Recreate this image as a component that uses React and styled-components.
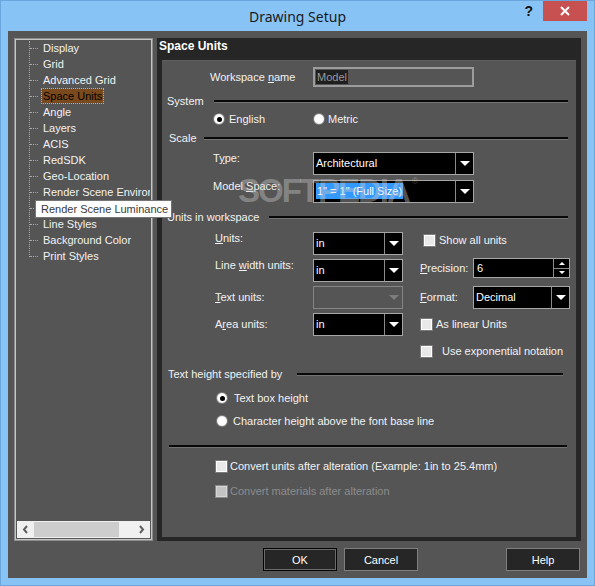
import React from "react"
import styled, { createGlobalStyle } from "styled-components"

const GlobalStyle = createGlobalStyle`
  html, body {
    margin: 0;
    padding: 0;
    background: #ffffff;
  }
  body {
    font-family: "Liberation Sans", Arial, sans-serif;
    font-size: 11px;
  }
`

const Window = styled.div`
  width: 595px;
  height: 586px;
  box-sizing: border-box;
  background: #88c3f5;
  border: 1px solid #6aa6dc;
  display: flex;
  flex-direction: column;
`

const TitleBar = styled.div`
  height: 30px;
  display: grid;
  grid-template-columns: 1fr auto 1fr;
  align-items: start;
`

const Title = styled.div`
  grid-column: 2;
  font-family: "Noto Sans", "Open Sans", sans-serif;
  font-size: 14px;
  color: #1a1a1a;
  line-height: 20px;
  padding-top: 6px;
`

const TitleButtons = styled.div`
  grid-column: 3;
  justify-self: end;
  display: flex;
  align-items: flex-start;
  margin-right: 7px;
`

const HelpGlyph = styled.span`
  font-family: "Liberation Sans", sans-serif;
  font-weight: bold;
  font-size: 14px;
  color: #111;
  line-height: 20px;
  margin-right: 10px;
`

const CloseButton = styled.div`
  width: 44px;
  height: 20px;
  background: #c75050;
  color: #fff;
  display: flex;
  align-items: center;
  justify-content: center;
`

const Client = styled.div`
  position: relative;
  flex: 1;
  margin: 0 7px 7px 7px;
  background: #555555;
  padding: 7px 6px 0 6px;
  display: flex;
  flex-direction: column;
  color: #f2f2f2;
`

const Panels = styled.div`
  height: 503px;
  display: flex;
  gap: 4px;
`

const TreePanel = styled.div`
  width: 139px;
  box-sizing: border-box;
  border: 1px solid #8c8c8c;
  box-shadow: inset 0 0 0 1px #c6c6c6;
  padding: 1px 2px 2px 2px;
  display: flex;
  flex-direction: column;
  overflow: hidden;
`

const TreeList = styled.div`
  position: relative;
  flex: 1;
  padding: 0 0 0 24px;
  overflow: hidden;
  &::before {
    content: "";
    position: absolute;
    left: 12px;
    top: 1px;
    height: 216px;
    border-left: 1px dotted #a8a8a8;
  }
`

const TreeItem = styled.div`
  position: relative;
  height: 16px;
  line-height: 16px;
  white-space: nowrap;
  padding: 0 2px;
  &::before {
    content: "";
    position: absolute;
    left: -11px;
    top: 8px;
    width: 8px;
    border-top: 1px dotted #a8a8a8;
  }
  span {
    display: inline-block;
    line-height: 14px;
    padding: 0 1px;
    margin-left: -1px;
    background: ${({ $selected }) => ($selected ? "#7b4a1c" : "transparent")};
    color: ${({ $selected }) => ($selected ? "#000" : "#f2f2f2")};
    outline: ${({ $selected }) => ($selected ? "1px dotted #c9b08a" : "none")};
  }
`

const HScroll = styled.div`
  height: 17px;
  background: #f0f0f0;
  display: flex;
  align-items: stretch;
`

const ScrollArrow = styled.div`
  width: 17px;
  display: flex;
  align-items: center;
  justify-content: center;
`

const ScrollTrack = styled.div`
  flex: 1;
  display: flex;
  padding: 1px 0;
  padding-right: 15px;
`

const ScrollThumb = styled.div`
  width: 85px;
  background: #cdcdcd;
`

const PagePanel = styled.div`
  flex: 1;
  background: #262626;
  display: flex;
  flex-direction: column;
  padding: 0 5px 4px 5px;
`

const PageHeader = styled.div`
  height: 22px;
  margin-left: -3px;
  font-weight: bold;
  font-size: 12px;
  line-height: 16px;
  color: #fff;
`

const PageBody = styled.div`
  position: relative;
  flex: 1;
  background: #555555;
  border-top: 1px solid #5e5e5e;
  display: flex;
  flex-direction: column;
  overflow: hidden;
`

const Row = styled.div`
  display: flex;
  align-items: center;
  margin-top: ${({ $top }) => $top || 0}px;
  padding-left: ${({ $indent }) => $indent || 0}px;
`

// $raised labels sit at the top of their row, beside the control's top edge
const Label = styled.div`
  width: ${({ $width }) => ($width ? `${$width}px` : "auto")};
  flex-shrink: 0;
  white-space: nowrap;
  align-self: ${({ $raised }) => ($raised ? "flex-start" : "auto")};
  line-height: 13px;
  margin-top: ${({ $raised }) => ($raised && $raised !== true ? $raised : 0)}px;
  u {
    text-decoration: underline;
  }
`

const Section = styled.div`
  display: flex;
  align-items: center;
  height: 14px;
  margin-top: ${({ $top }) => $top}px;
  padding-left: ${({ $indent }) => $indent}px;
  padding-right: ${({ $right }) => $right || 8}px;
`

const Etched = styled.div`
  flex: 1;
  height: 0;
  border-top: 2px solid #080808;
  border-bottom: 1px solid #727272;
  margin-left: ${({ $gap }) => $gap || 0}px;
`

const TextInput = styled.div`
  width: 161px;
  height: 20px;
  box-sizing: border-box;
  border: 2px solid #9c9c9c;
  padding-left: 1px;
  display: flex;
  align-items: center;
  span {
    background: #1f1f1f;
    color: #9a9a9a;
    line-height: 14px;
    padding: 0 1px;
  }
`

const ComboBox = styled.div`
  width: ${({ $width }) => $width}px;
  height: 23px;
  box-sizing: border-box;
  border: 1px solid ${({ $disabled }) => ($disabled ? "#858585" : "#a6a6a6")};
  background: ${({ $disabled }) => ($disabled ? "#555" : "#000")};
  display: flex;
`

const ComboText = styled.div`
  flex: 1;
  padding-left: 2px;
  line-height: 21px;
  color: #fff;
  white-space: nowrap;
  overflow: hidden;
  span {
    background: #3399ff;
    padding: 2px 1px;
  }
`

const ComboButton = styled.div`
  width: 17px;
  border-left: 1px solid ${({ $disabled }) => ($disabled ? "#555" : "#8a8a8a")};
  display: flex;
  align-items: center;
  justify-content: center;
  &::after {
    content: "";
    border-left: 5px solid transparent;
    border-right: 5px solid transparent;
    border-top: 5px solid ${({ $disabled }) => ($disabled ? "#7d7d7d" : "#fff")};
  }
`

const SpinBox = styled.div`
  width: 97px;
  height: 20px;
  box-sizing: border-box;
  border: 1px solid #a6a6a6;
  background: #000;
  display: flex;
  align-self: start;
  margin-top: -1px;
`

const SpinText = styled.div`
  flex: 1;
  padding-left: 3px;
  line-height: 18px;
  color: #fff;
`

const SpinButtons = styled.div`
  width: 15px;
  border-left: 1px solid #8a8a8a;
  display: flex;
  flex-direction: column;
`

const SpinArrow = styled.div`
  flex: 1;
  display: flex;
  align-items: center;
  justify-content: center;
  & + & {
    border-top: 1px solid #8a8a8a;
  }
  &::after {
    content: "";
    border-left: 3px solid transparent;
    border-right: 3px solid transparent;
    ${({ $up }) =>
      $up ? "border-bottom: 3px solid #fff;" : "border-top: 3px solid #fff;"}
  }
`

const UnitsGrid = styled.div`
  display: grid;
  grid-template-columns: 98px 90px 70px 97px;
  grid-auto-rows: 22px;
  row-gap: 5px;
  margin-top: 8px;
  padding-left: 53px;
  align-items: center;
`

const RightLabel = styled(Label)`
  padding-left: 17px;
`

const RightCell = styled.div`
  grid-column: 3 / span 2;
  margin-left: ${({ $offset }) => 17 + ($offset || 0)}px;
  align-self: ${({ $raised }) => ($raised ? "start" : "center")};
  margin-top: ${({ $raised }) => ($raised ? 1 : 0)}px;
`

const Choice = styled.label`
  display: flex;
  align-items: center;
  height: 14px;
  width: ${({ $width }) => ($width ? `${$width}px` : "auto")};
  color: ${({ $disabled }) => ($disabled ? "#8c8c8c" : "#f2f2f2")};
  white-space: nowrap;
`

const Radio = styled.span`
  width: 12px;
  height: 12px;
  box-sizing: border-box;
  border-radius: 50%;
  border: 1px solid #7d7d7d;
  background: radial-gradient(circle, #ffffff 55%, #dcdcdc 100%);
  display: flex;
  align-items: center;
  justify-content: center;
  margin-right: ${({ $gap }) => $gap || 4}px;
  &::after {
    content: "";
    width: 5px;
    height: 5px;
    border-radius: 50%;
    background: ${({ $checked }) => ($checked ? "#000" : "transparent")};
  }
`

const Check = styled.span`
  width: 13px;
  height: 13px;
  box-sizing: border-box;
  border: 1px solid ${({ $disabled }) => ($disabled ? "#8a8a8a" : "#7a7a7a")};
  background: ${({ $disabled }) => ($disabled ? "#c4c4c4" : "#e9e9e9")};
  box-shadow: inset 0 0 0 1px ${({ $disabled }) => ($disabled ? "#d6d6d6" : "#fff")};
  margin-right: ${({ $gap }) => $gap || 3}px;
  flex-shrink: 0;
`

const Watermark = styled.div`
  position: absolute;
  left: 76px;
  top: 111px;
  font-family: "Liberation Sans", Arial, sans-serif;
  font-weight: bold;
  font-size: 33px;
  letter-spacing: -2px;
  color: rgba(200, 200, 200, 0.42);
  pointer-events: none;
  sup {
    font-size: 9px;
    font-weight: normal;
    vertical-align: 18px;
    margin-left: 3px;
  }
`

const ButtonRow = styled.div`
  display: flex;
  justify-content: flex-end;
  margin-top: 7px;
  padding-right: 1px;
`

const DialogButton = styled.div`
  width: 74px;
  height: 23px;
  box-sizing: border-box;
  background: #262626;
  border: 1px solid ${({ $default }) => ($default ? "#050505" : "#7f7f7f")};
  box-shadow: ${({ $default }) => ($default ? "inset 0 0 0 1px #6a6a6a" : "none")};
  color: #fff;
  display: flex;
  align-items: center;
  justify-content: center;
  margin-right: ${({ $gap }) => $gap || 0}px;
`

const Tooltip = styled.div`
  position: absolute;
  left: 27px;
  top: 169px;
  width: 137px;
  height: 18px;
  box-sizing: border-box;
  background: #fff;
  border: 1px solid #767676;
  color: #3a3a3a;
  padding-left: 5px;
  line-height: 16px;
  white-space: nowrap;
  z-index: 5;
`

const treeItems = [
  "Display",
  "Grid",
  "Advanced Grid",
  "Space Units",
  "Angle",
  "Layers",
  "ACIS",
  "RedSDK",
  "Geo-Location",
  "Render Scene Environment",
  "Render Scene Luminance",
  "Line Styles",
  "Background Color",
  "Print Styles",
]

const Combo = ({ width, children, disabled }) => (
  <ComboBox $width={width} $disabled={disabled}>
    <ComboText>{children}</ComboText>
    <ComboButton $disabled={disabled} />
  </ComboBox>
)

const Chevron = ({ dir }) => (
  <svg width="7" height="9" viewBox="0 0 7 9">
    <path
      d={dir === "left" ? "M5 1 L2 4.5 L5 8" : "M2 1 L5 4.5 L2 8"}
      fill="none"
      stroke="#606060"
      strokeWidth="2"
    />
  </svg>
)

const App = () => {
  return (
    <>
      <GlobalStyle />
      <Window>
        <TitleBar>
          <Title>Drawing Setup</Title>
          <TitleButtons>
            <HelpGlyph>?</HelpGlyph>
            <CloseButton>
              <svg width="10" height="10" viewBox="0 0 10 10">
                <path d="M1 1 L9 9 M9 1 L1 9" stroke="#fff" strokeWidth="2" />
              </svg>
            </CloseButton>
          </TitleButtons>
        </TitleBar>
        <Client>
          <Panels>
            <TreePanel>
              <TreeList>
                {treeItems.map(item => (
                  <TreeItem key={item} $selected={item === "Space Units"}>
                    <span>{item}</span>
                  </TreeItem>
                ))}
              </TreeList>
              <HScroll>
                <ScrollArrow>
                  <Chevron dir="left" />
                </ScrollArrow>
                <ScrollTrack>
                  <ScrollThumb />
                </ScrollTrack>
                <ScrollArrow>
                  <Chevron dir="right" />
                </ScrollArrow>
              </HScroll>
            </TreePanel>

            <PagePanel>
              <PageHeader>Space Units</PageHeader>
              <PageBody>
                <Row $top={6} $indent={48}>
                  <Label $width={103}>
                    Workspace <u>n</u>ame
                  </Label>
                  <TextInput>
                    <span>Model</span>
                  </TextInput>
                </Row>

                <Section $top={7} $indent={5}>
                  <Label>System</Label>
                  <Etched $gap={10} />
                </Section>
                <Row $top={4} $indent={51}>
                  <Choice $width={100}>
                    <Radio $checked />
                    English
                  </Choice>
                  <Choice>
                    <Radio $gap={3} />
                    Metric
                  </Choice>
                </Row>

                <Section $top={5} $indent={7}>
                  <Label>Scale</Label>
                  <Etched $gap={7} />
                </Section>
                <Row $top={7} $indent={51}>
                  <Label $width={100} $raised>
                    T<u>y</u>pe:
                  </Label>
                  <Combo width={161}>Architectural</Combo>
                </Row>
                <Row $top={5} $indent={51}>
                  <Label $width={100} $raised>
                    Model <u>S</u>pace:
                  </Label>
                  <Combo width={161}>
                    <span>1" = 1" (Full Size)</span>
                  </Combo>
                </Row>

                <Section $top={7} $indent={5}>
                  <Label>Units in workspace</Label>
                  <Etched $gap={10} />
                </Section>
                <UnitsGrid>
                  <Label $raised>
                    <u>U</u>nits:
                  </Label>
                  <Combo width={90}>in</Combo>
                  <RightCell $offset={3} $raised>
                    <Choice>
                      <Check />
                      Show all units
                    </Choice>
                  </RightCell>

                  <Label $raised>
                    Line <u>w</u>idth units:
                  </Label>
                  <Combo width={90}>in</Combo>
                  <RightLabel $raised={3}>
                    <u>P</u>recision:
                  </RightLabel>
                  <SpinBox>
                    <SpinText>6</SpinText>
                    <SpinButtons>
                      <SpinArrow $up />
                      <SpinArrow />
                    </SpinButtons>
                  </SpinBox>

                  <Label>
                    <u>T</u>ext units:
                  </Label>
                  <Combo width={90} disabled />
                  <RightLabel>
                    <u>F</u>ormat:
                  </RightLabel>
                  <Combo width={97}>Decimal</Combo>

                  <Label>
                    A<u>r</u>ea units:
                  </Label>
                  <Combo width={90}>in</Combo>
                  <RightCell>
                    <Choice>
                      <Check />
                      As linear Units
                    </Choice>
                  </RightCell>

                  <span />
                  <span />
                  <RightCell>
                    <Choice>
                      <Check $gap={9} />
                      Use exponential notation
                    </Choice>
                  </RightCell>
                </UnitsGrid>

                <Section $top={5} $indent={6} $right={13}>
                  <Label>Text height specified by</Label>
                  <Etched $gap={15} />
                </Section>
                <Row $top={10} $indent={54}>
                  <Choice>
                    <Radio $checked $gap={6} />
                    Text box height
                  </Choice>
                </Row>
                <Row $top={9} $indent={54}>
                  <Choice>
                    <Radio $gap={5} />
                    Character height above the font base line
                  </Choice>
                </Row>

                <Section $top={11} $indent={7} $right={9}>
                  <Etched />
                </Section>

                <Row $top={6} $indent={53}>
                  <Choice>
                    <Check $gap={2} />
                    Convert units after alteration (Example: 1in to 25.4mm)
                  </Choice>
                </Row>
                <Row $top={11} $indent={53}>
                  <Choice $disabled>
                    <Check $disabled $gap={2} />
                    Convert materials after alteration
                  </Choice>
                </Row>

                <Watermark>
                  SOFTPEDIA<sup>®</sup>
                </Watermark>
              </PageBody>
            </PagePanel>
          </Panels>

          <ButtonRow>
            <DialogButton $default $gap={7}>
              OK
            </DialogButton>
            <DialogButton $gap={88}>Cancel</DialogButton>
            <DialogButton>Help</DialogButton>
          </ButtonRow>

          <Tooltip>Render Scene Luminance</Tooltip>
        </Client>
      </Window>
    </>
  )
}

export default App
